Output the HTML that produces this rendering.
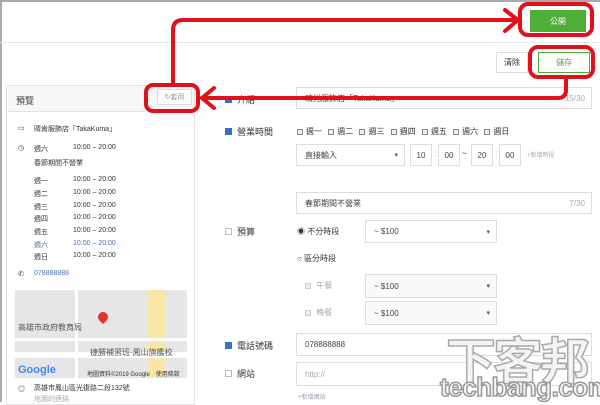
<!DOCTYPE html>
<html><head><meta charset="utf-8"><style>
*{margin:0;padding:0;box-sizing:border-box}
body{width:600px;height:402px;overflow:hidden;background:#fff;position:relative;font-family:"Liberation Sans","Noto Sans CJK TC",sans-serif;font-size:8px;color:#333}
.a{position:absolute}
.inp{position:absolute;border:1px solid #ddd;background:#fff;font-size:8px;color:#444;padding-left:8px;display:flex;align-items:center}
.cnt{position:absolute;right:6px;color:#aaa}
.cb{position:absolute;width:7px;height:7px;border:1px solid #bbb;background:#fff}
.cb.on{background:#3a6fc9;border-color:#3a6fc9}
.sm{width:6px;height:6px;border:1px solid #888;display:inline-block;margin-right:3px;vertical-align:-1px;background:#eee}
.sel:after{content:"▾";position:absolute;right:6px;font-size:7px;color:#555}
.row span{position:absolute;font-size:7px}
</style></head><body>
<div class="a" style="left:0;top:0;width:600px;height:2px;background:#aaa"></div>
<div class="a" style="left:0;top:0;width:2px;height:402px;background:#aaa"></div>
<div class="a" style="left:0;top:42px;width:600px;height:1px;background:#e8e8e8"></div>
<div class="a" style="left:530px;top:10px;width:56px;height:22px;background:#4fae36;color:#fff;font-size:8px;display:flex;align-items:center;justify-content:center">公開</div>
<div class="a" style="left:496px;top:52px;width:32px;height:21px;border:1px solid #ddd;display:flex;align-items:center;justify-content:center">清除</div>
<div class="a" style="left:538px;top:52px;width:52px;height:21px;border:1px solid #4fae36;color:#4fae36;display:flex;align-items:center;justify-content:center">儲存</div>
<div class="a" style="left:6px;top:85px;width:189px;height:320px;border:1px solid #e4e4e4"></div>
<div class="a" style="left:6px;top:85px;width:189px;height:27px;background:#f7f7f7;border:1px solid #e4e4e4"></div>
<div class="a" style="left:16px;top:94px;font-size:9px">預覽</div>
<div class="a" style="left:157px;top:89px;width:35px;height:16px;border:1px solid #ddd;background:#fff;color:#999;font-size:7px;display:flex;align-items:center;justify-content:center">↻套用</div>
<div class="row">
<span style="left:18px;top:124px">▭</span><span style="left:34px;top:124px">晴肯服飾店「TakaKuma」</span>
<span style="left:18px;top:144px">◷</span><span style="left:34px;top:144px">週六</span><span style="left:73px;top:144px">10:00 – 20:00</span>
<span style="left:34px;top:158px">春節期間不營業</span>
<span style="left:34px;top:176px">週一</span><span style="left:73px;top:176px">10:00 – 20:00</span>
<span style="left:34px;top:189px">週二</span><span style="left:73px;top:189px">10:00 – 20:00</span>
<span style="left:34px;top:202px">週三</span><span style="left:73px;top:202px">10:00 – 20:00</span>
<span style="left:34px;top:214px">週四</span><span style="left:73px;top:214px">10:00 – 20:00</span>
<span style="left:34px;top:227px">週五</span><span style="left:73px;top:227px">10:00 – 20:00</span>
<span style="left:34px;top:240px;color:#4a6fb5">週六</span><span style="left:73px;top:240px;color:#4a6fb5">10:00 – 20:00</span>
<span style="left:34px;top:252px">週日</span><span style="left:73px;top:252px">10:00 – 20:00</span>
<span style="left:18px;top:270px">✆</span><span style="left:34px;top:270px;color:#4a6fb5">078888888</span>
<span style="left:18px;top:384px">◎</span><span style="left:34px;top:383px">高雄市鳳山區光復路二段132號</span>
<span style="left:34px;top:394px;color:#aaa">地圖的連結</span>
</div>
<div class="a" style="left:15px;top:290px;width:172px;height:88px;background:#e6e6e8;overflow:hidden">
<div class="a" style="left:132px;top:0;width:18px;height:88px;background:#f7e6a8"></div>
<div class="a" style="left:0;top:62px;width:172px;height:6px;background:#fff"></div>
<div class="a" style="left:0;top:48px;width:172px;height:3px;background:#fff"></div>
<div class="a" style="left:60px;top:0;width:3px;height:88px;background:#fff"></div>
<div class="a" style="left:83px;top:22px;width:10px;height:10px;border-radius:50% 50% 50% 0;transform:rotate(-45deg);background:#e0332b"></div>
<div class="a" style="left:3px;top:32px;font-size:8px;color:#555">高雄市政府教育局</div>
<div class="a" style="left:75px;top:57px;font-size:8px;color:#555">捷勝補習班-鳳山旗艦校</div>
<div class="a" style="left:3px;top:74px;font-size:11px;font-weight:bold;color:#4285f4">Google</div>
<div class="a" style="left:72px;top:79px;font-size:6px;color:#333">地圖資料©2019 Google　使用條款</div>
</div>
<div class="cb on" style="left:225px;top:96px"></div><div class="a" style="left:237px;top:93px;font-size:9px">介紹</div>
<div class="inp" style="left:296px;top:87px;width:296px;height:22px">晴光服飾店「TakaKuma」<span class="cnt">15/30</span></div>
<div class="cb on" style="left:225px;top:128px"></div><div class="a" style="left:237px;top:125px;font-size:9px">營業時間</div>
<div class="a" style="left:297px;top:126px;font-size:8px;word-spacing:4px"><span class="sm"></span>週一 <span class="sm"></span>週二 <span class="sm"></span>週三 <span class="sm"></span>週四 <span class="sm"></span>週五 <span class="sm"></span>週六 <span class="sm"></span>週日</div>
<div class="inp sel" style="left:296px;top:144px;width:109px;height:22px">直接輸入</div>
<div class="inp" style="left:410px;top:144px;width:22px;height:22px;padding:0;justify-content:center">10</div>
<div class="a" style="left:434px;top:149px;color:#999">:</div>
<div class="inp" style="left:438px;top:144px;width:22px;height:22px;padding:0;justify-content:center">00</div>
<div class="a" style="left:462px;top:149px">~</div>
<div class="inp" style="left:471px;top:144px;width:22px;height:22px;padding:0;justify-content:center">20</div>
<div class="a" style="left:495px;top:149px;color:#999">:</div>
<div class="inp" style="left:499px;top:144px;width:22px;height:22px;padding:0;justify-content:center">00</div>
<div class="a" style="left:527px;top:150px;font-size:6px;color:#aaa">+新增時段</div>
<div class="inp" style="left:296px;top:192px;width:296px;height:22px">春節期間不營業<span class="cnt">7/30</span></div>
<div class="cb" style="left:225px;top:228px"></div><div class="a" style="left:237px;top:225px;font-size:9px">預算</div>
<div class="a" style="left:297px;top:226px;font-size:8px">◉ 不分時段</div>
<div class="inp sel" style="left:365px;top:220px;width:132px;height:23px">~ $100</div>
<div class="a" style="left:297px;top:253px;font-size:8px">○ 區分時段</div>
<div class="a" style="left:305px;top:280px;font-size:8px;color:#aaa"><span class="sm" style="border-color:#ccc"></span> 午餐</div>
<div class="inp sel" style="left:365px;top:274px;width:132px;height:24px;background:#fafafa">~ $100</div>
<div class="a" style="left:305px;top:307px;font-size:8px;color:#aaa"><span class="sm" style="border-color:#ccc"></span> 晚餐</div>
<div class="inp sel" style="left:365px;top:301px;width:132px;height:24px;background:#fafafa">~ $100</div>
<div class="cb on" style="left:225px;top:342px"></div><div class="a" style="left:237px;top:339px;font-size:9px">電話號碼</div>
<div class="inp" style="left:296px;top:333px;width:296px;height:23px">078888888</div>
<div class="cb" style="left:225px;top:370px"></div><div class="a" style="left:237px;top:367px;font-size:9px">網站</div>
<div class="inp" style="left:296px;top:362px;width:296px;height:24px;color:#aaa">http://</div>
<div class="a" style="left:298px;top:392px;font-size:6px;color:#99a">+新增網站</div>
<div class="a" style="left:446px;top:322px;font-size:50px;font-weight:bold;color:#f4f4f4;-webkit-text-stroke:1.5px #aaa;letter-spacing:-3px;font-family:'Noto Sans CJK TC',sans-serif">下客邦</div>
<div class="a" style="left:440px;top:372px;font-size:26px;font-weight:bold;color:#f4f4f4;-webkit-text-stroke:1.5px #999;letter-spacing:-0.5px">techbang.com</div>
<svg class="a" style="left:0;top:0" width="600" height="402">
<g fill="none" stroke="#e0101c" stroke-width="4" stroke-linejoin="round" stroke-linecap="round">
<rect x="520" y="4" width="72" height="31" rx="8"/>
<rect x="530" y="47" width="63" height="30" rx="8"/>
<rect x="146" y="85" width="52" height="26" rx="7"/>
<path d="M173 85 V30 Q173 20 183 20 H518"/>
<path d="M505 10 L518 20 L505 31"/>
<path d="M566 78 V90 Q566 98 558 98 H202"/>
<path d="M214 88 L202 98 L214 108"/>
</g></svg>
</body></html>
